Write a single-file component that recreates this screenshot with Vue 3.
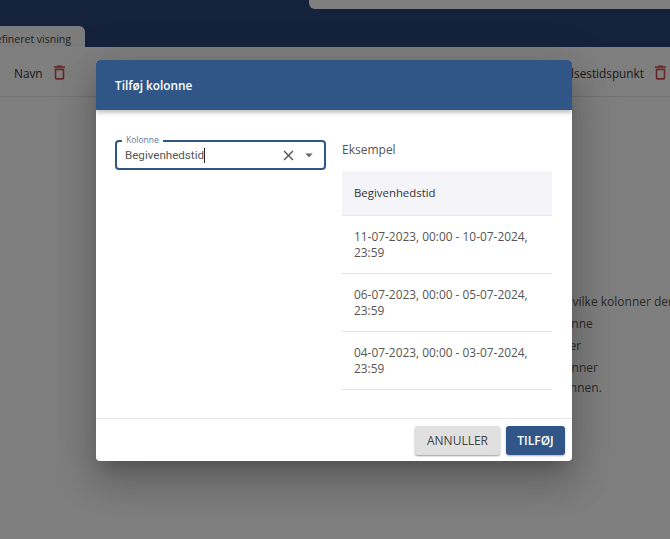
<template>
  <div class="page">
    <div class="navbar">
      <div class="tab">Foruddefineret visning</div>
      <div class="search-stub"></div>
    </div>
    <div class="columns">
      <div class="col-item">
        <span>Navn</span>
        <svg class="trash" viewBox="0 0 24 24"><path d="M6 19a2 2 0 0 0 2 2h8a2 2 0 0 0 2-2V7H6v12zM8 9h8v10H8V9zm7.5-5-1-1h-5l-1 1H5v2h14V4h-3.5z" /></svg>
      </div>
      <div class="col-item">
        <span>Oprettelsestidspunkt</span>
        <svg class="trash" viewBox="0 0 24 24"><path d="M6 19a2 2 0 0 0 2 2h8a2 2 0 0 0 2-2V7H6v12zM8 9h8v10H8V9zm7.5-5-1-1h-5l-1 1H5v2h14V4h-3.5z" /></svg>
      </div>
    </div>
    <div class="help">
      <p>Her vælger du, hvilke kolonner der</p>
      <p>Tilføj en hel kolonne</p>
      <p>Vis eller skjul filter</p>
      <p>Skift rundt i kolonner</p>
      <p>Sorter med kolonnen.</p>
    </div>

    <div class="scrim"></div>

    <div class="dialog">
      <header class="dialog-head">Tilføj kolonne</header>
      <div class="dialog-body">
        <div class="field">
          <span class="field-label">Kolonne</span>
          <span class="field-value">Begivenhedstid</span>
          <span class="caret"></span>
          <svg class="clear" viewBox="0 0 24 24"><path d="M19 6.41 17.59 5 12 10.59 6.41 5 5 6.41 10.59 12 5 17.59 6.41 19 12 13.41 17.59 19 19 17.59 13.41 12z" /></svg>
          <svg class="arrow" viewBox="0 0 24 24"><path d="m7 10 5 5 5-5z" /></svg>
        </div>
        <div class="example">
          <div class="example-title">Eksempel</div>
          <div class="example-head">Begivenhedstid</div>
          <div v-for="row in rows" :key="row" class="example-row">{{ row }}</div>
        </div>
      </div>
      <footer class="dialog-foot">
        <button class="btn btn-cancel">ANNULLER</button>
        <button class="btn btn-add">TILFØJ</button>
      </footer>
    </div>
  </div>
</template>

<script setup>
const rows = [
  '11-07-2023, 00:00 - 10-07-2024, 23:59',
  '06-07-2023, 00:00 - 05-07-2024, 23:59',
  '04-07-2023, 00:00 - 03-07-2024, 23:59'
]
</script>

<style>
html, body { margin: 0; overflow: hidden; }
</style>

<style scoped>
* { box-sizing: border-box; }

.page {
  position: relative;
  width: 670px;
  height: 539px;
  overflow: hidden;
  background: #fff;
  font-family: 'Open Sans', 'Noto Sans', sans-serif;
  font-size: 12px;
  color: #333;
}

.navbar {
  height: 47px;
  background: #284676;
  display: flex;
  justify-content: space-between;
  align-items: flex-start;
}

.search-stub {
  width: 361px;
  height: 9px;
  background: #fff;
  border-radius: 0 0 0 6px;
}

.tab {
  width: 85px;
  height: 21px;
  margin-top: 26px;
  background: #f8f8f8;
  border-radius: 0 6px 0 0;
  font-size: 10.5px;
  line-height: 27px;
  white-space: nowrap;
  direction: rtl;
  overflow: hidden;
  padding-right: 14px;
  color: #444;
}

.columns {
  height: 50px;
  display: flex;
  justify-content: space-between;
  align-items: center;
  padding: 2px 0 0 14px;
  border-bottom: 1px solid #e4e4e4;
  font-size: 11.8px;
}

.col-item {
  display: flex;
  align-items: center;
  gap: 7px;
}

.trash {
  width: 19px;
  height: 19px;
  fill: #cf4a4a;
}

.help {
  margin-top: 197px;
  padding-left: 480px;
  font-size: 12px;
  color: #555;
  white-space: nowrap;
}

.help p {
  margin: 0 0 6px;
  line-height: 16px;
}

.help p:last-child { margin-top: -2px; }

.scrim {
  position: absolute;
  inset: 0;
  background: rgba(0, 0, 0, 0.5);
}

.dialog {
  position: absolute;
  left: 96px;
  top: 60px;
  width: 476px;
  height: 401px;
  background: #fff;
  border-radius: 4px;
  display: flex;
  flex-direction: column;
  overflow: hidden;
  box-shadow: 0 11px 15px -7px rgba(0, 0, 0, 0.2), 0 24px 38px 3px rgba(0, 0, 0, 0.14), 0 9px 46px 8px rgba(0, 0, 0, 0.12);
}

.dialog-head {
  height: 50px;
  flex: none;
  background: #2f5687;
  color: #fff;
  font-size: 11.8px;
  font-weight: 600;
  line-height: 50px;
  padding-left: 19px;
  box-shadow: 0 2px 5px rgba(0, 0, 0, 0.3);
}

.dialog-body {
  flex: 1;
  display: flex;
  gap: 16px;
  padding: 30px 20px 0 19px;
}

.field {
  position: relative;
  width: 211px;
  height: 30px;
  flex: none;
  border: 2px solid #2f5687;
  border-radius: 4px;
  display: flex;
  align-items: center;
  padding-left: 8px;
}

.field-label {
  position: absolute;
  top: -8px;
  left: 5px;
  padding: 0 4px;
  background: #fff;
  font-size: 8.5px;
  line-height: 12px;
  color: #5a7ba5;
}

.field-value {
  font-family: Roboto, sans-serif;
  font-size: 11.6px;
  color: #555;
}

.caret {
  width: 1px;
  height: 15px;
  background: #222;
  flex: none;
}

.clear {
  width: 17px;
  height: 17px;
  margin-left: auto;
  fill: #555;
  transform: translateX(1px);
}

.arrow {
  width: 18px;
  height: 18px;
  margin: 0 6px 0 4px;
  fill: #666;
}

.example {
  flex: 1;
  min-width: 0;
}

.example-title {
  font-size: 12px;
  line-height: 20px;
  color: #555;
  margin-bottom: 11px;
}

.example-head {
  height: 45px;
  background: #f4f4f9;
  border-bottom: 1px solid #e6e6e6;
  padding-left: 12px;
  line-height: 44px;
  font-size: 11.4px;
  color: #333;
}

.example-row {
  height: 58px;
  padding: 12px 12px 0;
  border-bottom: 1px solid #e2e2e2;
  font-size: 11.9px;
  line-height: 16px;
  color: #555;
}

.dialog-foot {
  height: 43px;
  flex: none;
  border-top: 1px solid #e8e8e8;
  display: flex;
  justify-content: flex-end;
  align-items: flex-start;
  gap: 6px;
  padding: 7px 7px 0 0;
}

.btn {
  height: 29px;
  border: none;
  border-radius: 3px;
  font-family: inherit;
  font-size: 12px;
  padding: 0;
}

.btn-cancel {
  width: 85px;
  background: #e0e0e0;
  color: #444;
  box-shadow: 0 1px 2px rgba(0, 0, 0, 0.4);
}

.btn-add {
  width: 59px;
  background: #2f5687;
  color: #fff;
  font-weight: 600;
  box-shadow: 0 1px 2px rgba(0, 0, 0, 0.3);
}
</style>
